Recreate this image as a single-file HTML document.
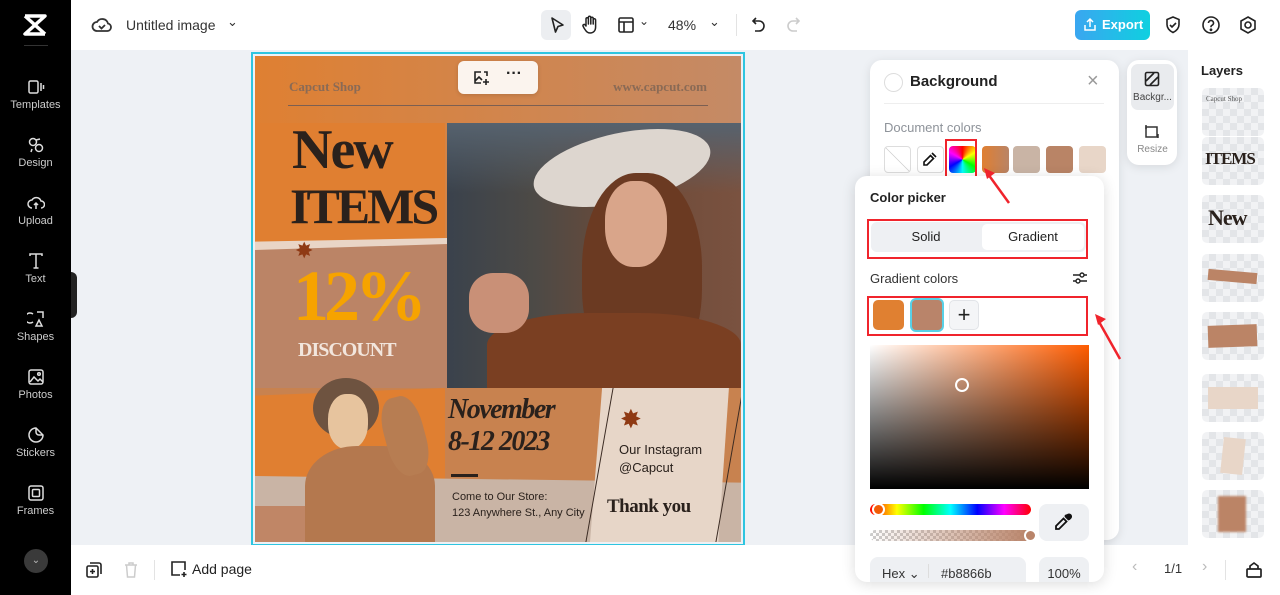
<!DOCTYPE html>
<html><head><meta charset="utf-8"><style>
*{box-sizing:border-box;margin:0;padding:0}
body{width:1280px;height:595px;overflow:hidden;background:#eef1f5;font-family:"Liberation Sans",sans-serif;position:relative;color:#1f2329}
.a{position:absolute}
.side{left:0;top:0;width:71px;height:595px;background:#000}
.si{position:absolute;left:0;width:71px;text-align:center;color:#ccc;font-size:11px}
.si svg{display:block;margin:0 auto 3px}
.top{left:71px;top:0;width:1209px;height:50px;background:#fff}
.bot{left:71px;top:545px;width:1209px;height:50px;background:#fff}
.serif{font-family:"Liberation Serif",serif}
.card{background:#fff;border-radius:12px;box-shadow:0 2px 10px rgba(0,0,0,.1)}
.sw{position:absolute;top:146px;width:27px;height:27px;border-radius:4px}
.red{position:absolute;border:2px solid #f0242c}
.lay{position:absolute;left:1202px;width:62px;height:48px;border-radius:5px;background:repeating-conic-gradient(#e3e5e8 0 25%,#f1f2f4 0 50%) 0 0/14px 14px;overflow:hidden}
</style></head><body>
<div class="a side">
 <svg class="a" style="left:22px;top:13px" width="26" height="24" viewBox="0 0 26 24"><path d="M3 3h20L3 21h20M3 3l20 18" stroke="#fff" stroke-width="3.5" fill="none" stroke-linejoin="round"/></svg>
 <div class="a" style="left:24px;top:45px;width:24px;height:1px;background:#333"></div>
 <div class="si" style="top:78px"><svg width="18" height="18" viewBox="0 0 18 18" fill="none" stroke="#ddd" stroke-width="1.5"><rect x="2" y="3" width="9" height="12" rx="1.5"/><path d="M14 5v8M16.5 7v4"/></svg>Templates</div>
 <div class="si" style="top:136px"><svg width="18" height="18" viewBox="0 0 18 18" fill="none" stroke="#ddd" stroke-width="1.5"><circle cx="6" cy="6" r="3.5"/><circle cx="12" cy="12" r="3.5"/><path d="M9 4l4-1M5 13l-1 3"/></svg>Design</div>
 <div class="si" style="top:194px"><svg width="18" height="18" viewBox="0 0 18 18" fill="none" stroke="#ddd" stroke-width="1.5"><path d="M5 14a4 4 0 0 1 0-8 5 5 0 0 1 9 1 3.5 3.5 0 0 1 0 7M9 9v6M7 11l2-2 2 2"/></svg>Upload</div>
 <div class="si" style="top:252px"><svg width="18" height="18" viewBox="0 0 18 18" fill="none" stroke="#ddd" stroke-width="1.5"><path d="M3 4V2h12v2M9 2v14M6.5 16h5"/></svg>Text</div>
 <div class="si" style="top:310px"><svg width="18" height="18" viewBox="0 0 18 18" fill="none" stroke="#ddd" stroke-width="1.5"><path d="M6 4a5 5 0 1 0 0 8M10 2h6v6M9 16l3-6 3 6z"/></svg>Shapes</div>
 <div class="si" style="top:368px"><svg width="18" height="18" viewBox="0 0 18 18" fill="none" stroke="#ddd" stroke-width="1.5"><rect x="2" y="2" width="14" height="14" rx="2"/><path d="M3 14l4-5 4 4 2-2 3 3"/><circle cx="12" cy="6" r="1.3"/></svg>Photos</div>
 <div class="si" style="top:426px"><svg width="18" height="18" viewBox="0 0 18 18" fill="none" stroke="#ddd" stroke-width="1.5"><path d="M16 9A7 7 0 1 1 9 2l7 7zM9 2v4a3 3 0 0 0 3 3h4"/></svg>Stickers</div>
 <div class="si" style="top:484px"><svg width="18" height="18" viewBox="0 0 18 18" fill="none" stroke="#ddd" stroke-width="1.5"><rect x="2" y="2" width="14" height="14" rx="2"/><rect x="5.5" y="5.5" width="7" height="7" rx="1"/></svg>Frames</div>
 <div class="a" style="left:24px;top:549px;width:24px;height:24px;border-radius:50%;background:#3a3a3a;color:#bbb;font-size:10px;text-align:center;line-height:24px">⌄</div>
 <div class="a" style="left:71px;top:272px;width:6px;height:46px;background:#222;border-radius:0 6px 6px 0"></div>
</div>
<div class="a top">
 <svg class="a" style="left:20px;top:15px" width="22" height="20" viewBox="0 0 22 20" fill="none" stroke="#333" stroke-width="1.8"><path d="M6 16a4.5 4.5 0 0 1 0-9 6 6 0 0 1 11 1.5 3.8 3.8 0 0 1-.5 7.5z"/><path d="M8 11l2.5 2.5L14 10"/></svg>
 <div class="a" style="left:55px;top:17px;font-size:14px;color:#333">Untitled image</div>
 <div class="a" style="left:156px;top:14px;font-size:13px;color:#333">⌄</div>
 <div class="a" style="left:470px;top:10px;width:30px;height:30px;border-radius:6px;background:#eceef1"></div>
 <svg class="a" style="left:477px;top:16px" width="18" height="18" viewBox="0 0 18 18" fill="none" stroke="#222" stroke-width="1.6" stroke-linejoin="round"><path d="M4 2l11 7-5 1.5L7.5 16z"/></svg>
 <svg class="a" style="left:510px;top:15px" width="18" height="20" viewBox="0 0 18 20" fill="none" stroke="#222" stroke-width="1.5" stroke-linejoin="round"><path d="M5 11V4a1.2 1.2 0 0 1 2.4 0v5V2.5a1.2 1.2 0 0 1 2.4 0V9V3.5a1.2 1.2 0 0 1 2.4 0V9V5a1.2 1.2 0 0 1 2.4 0v7c0 4-2.5 6-5.5 6S5 16 3 13l-1-2a1.2 1.2 0 0 1 2-1.2z"/></svg>
 <svg class="a" style="left:546px;top:16px" width="18" height="18" viewBox="0 0 18 18" fill="none" stroke="#222" stroke-width="1.6"><rect x="2" y="2" width="14" height="14" rx="1.5"/><path d="M2 6h14M7 6v10"/></svg>
 <div class="a" style="left:568px;top:14px;font-size:12px;color:#333">⌄</div>
 <div class="a" style="left:597px;top:17px;font-size:14px;color:#333">48%</div>
 <div class="a" style="left:638px;top:14px;font-size:13px;color:#333">⌄</div>
 <div class="a" style="left:665px;top:14px;width:1px;height:22px;background:#e3e3e3"></div>
 <svg class="a" style="left:680px;top:16px" width="16" height="18" viewBox="0 0 16 18" fill="none" stroke="#222" stroke-width="1.6"><path d="M5 2L2 5l3 3M2 5h6a5 5 0 0 1 0 10H4"/></svg>
 <svg class="a" style="left:714px;top:16px" width="16" height="18" viewBox="0 0 16 18" fill="none" stroke="#ccc" stroke-width="1.6"><path d="M11 2l3 3-3 3M14 5H8a5 5 0 0 0 0 10h4"/></svg>
 <div class="a" style="left:1004px;top:10px;width:75px;height:30px;border-radius:6px;background:linear-gradient(90deg,#3aa6f0,#0fd0e0);color:#fff;font-weight:bold;font-size:13px;line-height:30px;padding-left:27px">Export</div>
 <svg class="a" style="left:1012px;top:17px" width="14" height="15" viewBox="0 0 14 15" fill="none" stroke="#fff" stroke-width="1.5"><path d="M7 10V2M4 5l3-3 3 3M2 8v5h10V8"/></svg>
 <svg class="a" style="left:1093px;top:15px" width="18" height="20" viewBox="0 0 18 20" fill="none" stroke="#222" stroke-width="1.6"><path d="M9 2l6 2.5v5c0 4-3 6.5-6 8-3-1.5-6-4-6-8v-5z"/><path d="M6 10l2 2 4-4"/></svg>
 <svg class="a" style="left:1130px;top:15px" width="20" height="20" viewBox="0 0 20 20" fill="none" stroke="#222" stroke-width="1.6"><circle cx="10" cy="10" r="8"/><path d="M7.5 8a2.5 2.5 0 1 1 3.5 2.3c-.7.3-1 .8-1 1.5v.5"/><circle cx="10" cy="14.8" r=".6" fill="#222"/></svg>
 <svg class="a" style="left:1167px;top:15px" width="20" height="20" viewBox="0 0 20 20" fill="none" stroke="#222" stroke-width="1.6"><path d="M10 2l7 4v8l-7 4-7-4V6z"/><circle cx="10" cy="10" r="3"/></svg>
</div>
<div class="a" style="left:251px;top:52px;width:494px;height:494px;border:2px solid #2ec5e0"></div>
<div class="a" style="left:255px;top:56px;width:486px;height:486px;overflow:hidden;background:linear-gradient(90deg,#df8032,#c48a66)">
 <div class="a serif" style="left:34px;top:23px;font-size:13px;font-weight:bold;color:#8a6a55">Capcut Shop</div>
 <div class="a serif" style="right:34px;top:23px;font-size:13px;font-weight:bold;color:#8a6a55">www.capcut.com</div>
 <div class="a" style="left:33px;top:49px;width:420px;height:1px;background:#7c5f52"></div>
 <div class="a" style="left:0;top:67px;width:190px;height:118px;background:#e07f31"></div>
 <div class="a serif" style="left:37px;top:64px;font-size:56px;font-weight:bold;color:#2a211c;letter-spacing:-2px;line-height:60px">New</div>
 <div class="a serif" style="left:35px;top:122px;font-size:50px;font-weight:bold;color:#2a211c;letter-spacing:-3px;line-height:56px">ITEMS</div>
 <div class="a" style="left:0;top:182px;width:192px;height:150px;background:#bb8466;clip-path:polygon(0 6%,100% 0,100% 100%,0 100%)"></div>
 <div class="a" style="left:0;top:182px;width:192px;height:12px;background:#e9d5c6;clip-path:polygon(0 30%,100% 0,100% 50%,0 100%)"></div>
 <div class="a" style="left:40px;top:184px;color:#8f3a14;font-size:22px;line-height:22px">✸</div>
 <div class="a serif" style="left:38px;top:204px;font-size:72px;font-weight:bold;color:#f6a300;letter-spacing:-5px;line-height:72px">12%</div>
 <div class="a serif" style="left:43px;top:283px;font-size:20px;font-weight:bold;color:#f2e6dd;letter-spacing:-1px">DISCOUNT</div>
 <div class="a" style="left:192px;top:67px;width:294px;height:265px;background:linear-gradient(90deg,#3a424c 0%,#4d4a46 30%,#6c4a38 60%,#7a5240 100%);overflow:hidden">
  <div class="a" style="left:0;top:0;width:294px;height:70px;background:linear-gradient(180deg,#56626e,rgba(90,100,110,0))"></div>
  <div class="a" style="left:85px;top:10px;width:180px;height:70px;border-radius:50%;background:#ddd6cf;transform:rotate(-12deg)"></div>
  <div class="a" style="left:135px;top:50px;width:120px;height:210px;border-radius:45%;background:#6b3a22"></div>
  <div class="a" style="left:158px;top:58px;width:62px;height:86px;border-radius:45%;background:#d9a58a"></div>
  <div class="a" style="left:40px;top:190px;width:254px;height:80px;border-radius:40% 40% 0 0;background:#7a3f22"></div>
  <div class="a" style="left:22px;top:150px;width:60px;height:60px;border-radius:40%;background:#c99077"></div>
 </div>
 <div class="a" style="left:0;top:332px;width:486px;height:154px;background:#c8824f"></div>
 <div class="a" style="left:0;top:332px;width:190px;height:95px;background:#e07f31;clip-path:polygon(0 8%,100% 0,100% 100%,0 100%)"></div>
 <div class="a" style="left:0;top:420px;width:486px;height:66px;background:#c9b4a5;clip-path:polygon(0 0,100% 10%,100% 100%,0 100%)"></div>
 <div class="a" style="left:0;top:450px;width:120px;height:36px;background:#c08666"></div>
 <div class="a" style="left:58px;top:322px;width:66px;height:60px;border-radius:50%;background:#6e5340"></div>
 <div class="a" style="left:73px;top:338px;width:40px;height:55px;border-radius:45%;background:#e7c49e"></div>
 <div class="a" style="left:50px;top:390px;width:130px;height:100px;border-radius:40% 40% 0 0;background:#b4784e"></div>
 <div class="a" style="left:130px;top:340px;width:40px;height:80px;border-radius:40%;background:#b77d52;transform:rotate(-15deg)"></div>
 <div class="a" style="left:335px;top:332px;width:151px;height:154px;background:#e7d6c8;clip-path:polygon(8% 0,92% 0,85% 100%,0 100%)"></div>
 <div class="a" style="left:344px;top:332px;width:1px;height:154px;background:#3a2a22;transform:skewX(-10deg)"></div>
 <div class="a" style="left:474px;top:332px;width:1px;height:154px;background:#3a2a22;transform:skewX(-10deg)"></div>
 <div class="a serif" style="left:193px;top:338px;font-size:28px;font-weight:bold;font-style:italic;color:#2a211c;letter-spacing:-1.5px;line-height:32px">November<br>8-12 2023</div>
 <div class="a" style="left:196px;top:418px;width:27px;height:3px;background:#2a211c"></div>
 <div class="a" style="left:197px;top:433px;font-size:11px;color:#2a211c;line-height:16px">Come to Our Store:<br>123 Anywhere St., Any City</div>
 <div class="a" style="left:365px;top:350px;color:#8f3a14;font-size:26px;line-height:26px">✸</div>
 <div class="a" style="left:364px;top:385px;font-size:13px;color:#2a211c;line-height:18px">Our Instagram<br>@Capcut</div>
 <div class="a serif" style="left:352px;top:440px;font-size:19px;font-weight:bold;color:#2a211c;letter-spacing:-.5px">Thank you</div>
</div>
<div class="a" style="left:458px;top:61px;width:80px;height:33px;border-radius:6px;background:#fbf4ee;box-shadow:0 1px 4px rgba(0,0,0,.15)"></div>
<svg class="a" style="left:472px;top:69px" width="18" height="18" viewBox="0 0 18 18" fill="none" stroke="#222" stroke-width="1.6"><path d="M9 3H3v11h6M3 12l4-4 3 3"/><path d="M14 10v6M11 13h6M12 3h3v4"/></svg>
<div class="a" style="left:506px;top:65px;font-size:16px;font-weight:bold;color:#222">···</div>
<div class="a card" style="left:870px;top:60px;width:249px;height:480px"></div>
<div class="a" style="left:884px;top:73px;width:19px;height:19px;border-radius:50%;border:1px solid #ddd"></div>
<div class="a" style="left:910px;top:73px;font-size:15px;font-weight:bold;color:#222">Background</div>
<div class="a" style="left:1087px;top:70px;font-size:20px;color:#999">×</div>
<div class="a" style="left:884px;top:103px;width:220px;height:1px;background:#eee"></div>
<div class="a" style="left:884px;top:120px;font-size:13px;color:#8e939a">Document colors</div>
<div class="sw" style="left:884px;border:1px solid #ddd;background:linear-gradient(45deg,#fff 48%,#ccc 50%,#fff 52%)"></div>
<div class="sw" style="left:917px;border:1px solid #ddd;background:#fff"></div>
<svg class="a" style="left:922px;top:151px" width="16" height="16" viewBox="0 0 16 16" fill="none" stroke="#111" stroke-width="1.6"><path d="M10 2l4 4M8.5 4.5l3 3L5 14H2v-3z"/></svg>
<div class="sw" style="left:949px;background:conic-gradient(red,#ff0,lime,cyan,blue,#f0f,red)"></div>
<div class="red" style="left:945px;top:139px;width:32px;height:43px"></div>
<div class="sw" style="left:982px;background:linear-gradient(90deg,#e07f31,#b98466)"></div>
<div class="sw" style="left:1013px;background:#c9b4a5"></div>
<div class="sw" style="left:1046px;background:#b98466"></div>
<div class="sw" style="left:1079px;background:#e8d6c8"></div>
<div class="a card" style="left:1127px;top:60px;width:50px;height:105px"></div>
<div class="a" style="left:1131px;top:64px;width:43px;height:46px;border-radius:7px;background:#e9ebee"></div>
<svg class="a" style="left:1144px;top:71px" width="16" height="16" viewBox="0 0 16 16" fill="none" stroke="#222" stroke-width="1.6"><rect x="1.5" y="1.5" width="13" height="13" rx="1.5"/><path d="M2 10l8-8M6 14l8-8"/></svg>
<div class="a" style="left:1130px;top:92px;width:45px;text-align:center;font-size:10px;color:#444">Backgr...</div>
<svg class="a" style="left:1144px;top:124px" width="16" height="16" viewBox="0 0 16 16" fill="none" stroke="#333" stroke-width="1.5"><rect x="2" y="3" width="11" height="10"/><path d="M2 1v4M14 10v4"/></svg>
<div class="a" style="left:1130px;top:144px;width:45px;text-align:center;font-size:10px;color:#888">Resize</div>
<div class="a" style="left:1188px;top:50px;width:92px;height:495px;background:#fff"></div>
<div class="a" style="left:1201px;top:63px;font-size:13px;font-weight:bold;color:#222">Layers</div>
<div class="lay" style="top:88px"><div class="serif" style="font-size:7px;color:#555;padding:7px 4px">Capcut Shop</div></div>
<div class="lay" style="top:137px"><div class="serif" style="font-size:17px;font-weight:bold;color:#2a211c;padding:12px 3px;letter-spacing:-1px">ITEMS</div></div>
<div class="lay" style="top:195px"><div class="serif" style="font-size:22px;font-weight:bold;color:#2a211c;padding:10px 6px;letter-spacing:-1px">New</div></div>
<div class="lay" style="top:254px"><div style="position:absolute;left:6px;top:17px;width:49px;height:11px;background:#bb8466;transform:rotate(5deg)"></div></div>
<div class="lay" style="top:312px"><div style="position:absolute;left:6px;top:13px;width:49px;height:22px;background:#bb8466;transform:rotate(-2deg)"></div></div>
<div class="lay" style="top:374px"><div style="position:absolute;left:6px;top:13px;width:50px;height:22px;background:#e8d6c8"></div></div>
<div class="lay" style="top:432px"><div style="position:absolute;left:20px;top:6px;width:22px;height:36px;background:#e8d6c8;transform:rotate(6deg)"></div></div>
<div class="lay" style="top:490px"><div style="position:absolute;left:16px;top:6px;width:28px;height:36px;background:#bb8466;filter:blur(1px)"></div></div>
<div class="a bot">
 <svg class="a" style="left:14px;top:16px" width="18" height="18" viewBox="0 0 18 18" fill="none" stroke="#222" stroke-width="1.6"><rect x="2" y="5" width="11" height="11" rx="1.5"/><path d="M5 2h9a2 2 0 0 1 2 2v9M7.5 8v5M5 10.5h5"/></svg>
 <svg class="a" style="left:52px;top:16px" width="16" height="18" viewBox="0 0 16 18" fill="none" stroke="#ccc" stroke-width="1.5"><path d="M2 4h12M6 4V2h4v2M3.5 4l1 12h7l1-12"/></svg>
 <div class="a" style="left:83px;top:15px;width:1px;height:20px;background:#e3e3e3"></div>
 <svg class="a" style="left:99px;top:15px" width="18" height="18" viewBox="0 0 18 18" fill="none" stroke="#222" stroke-width="1.6"><path d="M10 15H2V2h13v8M14 12v5M11.5 14.5h5"/></svg>
 <div class="a" style="left:121px;top:16px;font-size:14px;color:#222">Add page</div>
 <div class="a" style="left:1061px;top:13px;font-size:16px;color:#bbb">‹</div>
 <div class="a" style="left:1093px;top:16px;font-size:13px;color:#333">1/1</div>
 <div class="a" style="left:1131px;top:13px;font-size:16px;color:#bbb">›</div>
 <div class="a" style="left:1154px;top:15px;width:1px;height:20px;background:#e3e3e3"></div>
 <svg class="a" style="left:1174px;top:16px" width="18" height="18" viewBox="0 0 18 18" fill="none" stroke="#222" stroke-width="1.7"><rect x="2" y="8" width="14" height="8" rx="1"/><path d="M5 8V5l4-3 4 3v3"/></svg>
</div>
<div class="a card" style="left:855px;top:176px;width:249px;height:406px;box-shadow:0 2px 14px rgba(0,0,0,.14)"></div>
<div class="a" style="left:870px;top:190px;font-size:13px;font-weight:bold;color:#222">Color picker</div>
<div class="a" style="left:871px;top:222px;width:215px;height:30px;border-radius:6px;background:#eef0f3"></div>
<div class="a" style="left:982px;top:224px;width:102px;height:26px;border-radius:5px;background:#fff"></div>
<div class="a" style="left:871px;top:229px;width:110px;text-align:center;font-size:13px;color:#222">Solid</div>
<div class="a" style="left:982px;top:229px;width:102px;text-align:center;font-size:13px;color:#222">Gradient</div>
<div class="red" style="left:867px;top:219px;width:221px;height:40px"></div>
<div class="a" style="left:870px;top:271px;font-size:13px;color:#333">Gradient colors</div>
<svg class="a" style="left:1072px;top:271px" width="16" height="14" viewBox="0 0 16 14" fill="none" stroke="#222" stroke-width="1.4"><path d="M1 4h14M1 10h14"/><circle cx="10" cy="4" r="2" fill="#fff"/><circle cx="6" cy="10" r="2" fill="#fff"/></svg>
<div class="a" style="left:873px;top:300px;width:31px;height:30px;border-radius:5px;background:#e08031"></div>
<div class="a" style="left:910px;top:298px;width:34px;height:34px;border-radius:6px;border:2px solid #58d0e6;background:#b9846a"></div>
<div class="a" style="left:949px;top:300px;width:30px;height:30px;border-radius:5px;border:1px solid #e2e4e8;background:#f4f5f7;text-align:center;line-height:27px;font-size:22px;color:#222">+</div>
<div class="red" style="left:867px;top:296px;width:221px;height:40px"></div>
<svg class="a" style="left:1094px;top:312px" width="28" height="50" viewBox="0 0 28 50"><path d="M26 47L4 8" stroke="#f0242c" stroke-width="2.5"/><path d="M1 2l11 5-8 6z" fill="#f0242c"/></svg>
<svg class="a" style="left:982px;top:166px" width="30" height="40" viewBox="0 0 30 40"><path d="M27 37L6 8" stroke="#f0242c" stroke-width="2.5"/><path d="M2 2l11 5-8 6z" fill="#f0242c"/></svg>
<div class="a" style="left:870px;top:345px;width:219px;height:144px;background:linear-gradient(0deg,#000,rgba(0,0,0,0)),linear-gradient(90deg,#fff,#ff5c00)"></div>
<div class="a" style="left:955px;top:378px;width:14px;height:14px;border-radius:50%;border:2px solid #fff"></div>
<div class="a" style="left:870px;top:504px;width:161px;height:11px;border-radius:6px;background:linear-gradient(90deg,red,#ff0,lime,cyan,blue,#f0f,red)"></div>
<div class="a" style="left:872px;top:503px;width:13px;height:13px;border-radius:50%;border:2px solid #fff;background:#f25c05"></div>
<div class="a" style="left:870px;top:530px;width:161px;height:11px;border-radius:6px;background:linear-gradient(90deg,rgba(185,132,106,0),#b9846a),repeating-conic-gradient(#ccc 0 25%,#fff 0 50%) 0 0/6px 6px"></div>
<div class="a" style="left:1024px;top:529px;width:13px;height:13px;border-radius:50%;border:2px solid #fff;background:#b9846a"></div>
<div class="a" style="left:1039px;top:504px;width:50px;height:37px;border-radius:8px;background:#eef0f3"></div>
<svg class="a" style="left:1054px;top:513px" width="18" height="18" viewBox="0 0 18 18" fill="none" stroke="#111" stroke-width="1.8"><path d="M11 3l4 4M9.5 5.5l3 3L5 16H2v-3z"/><path d="M12 2.5l3.5 3.5 1-1a2 2 0 0 0-3-3z" fill="#111"/></svg>
<div class="a" style="left:870px;top:557px;width:156px;height:25px;border-radius:8px 8px 0 0;background:#eef0f3"></div>
<div class="a" style="left:882px;top:566px;font-size:13px;color:#333">Hex ⌄</div>
<div class="a" style="left:928px;top:564px;width:1px;height:14px;background:#ddd"></div>
<div class="a" style="left:941px;top:566px;font-size:13px;color:#333">#b8866b</div>
<div class="a" style="left:1039px;top:557px;width:50px;height:25px;border-radius:8px 8px 0 0;background:#eef0f3;text-align:center;padding-top:9px;font-size:13px;color:#333">100%</div>
</body></html>
